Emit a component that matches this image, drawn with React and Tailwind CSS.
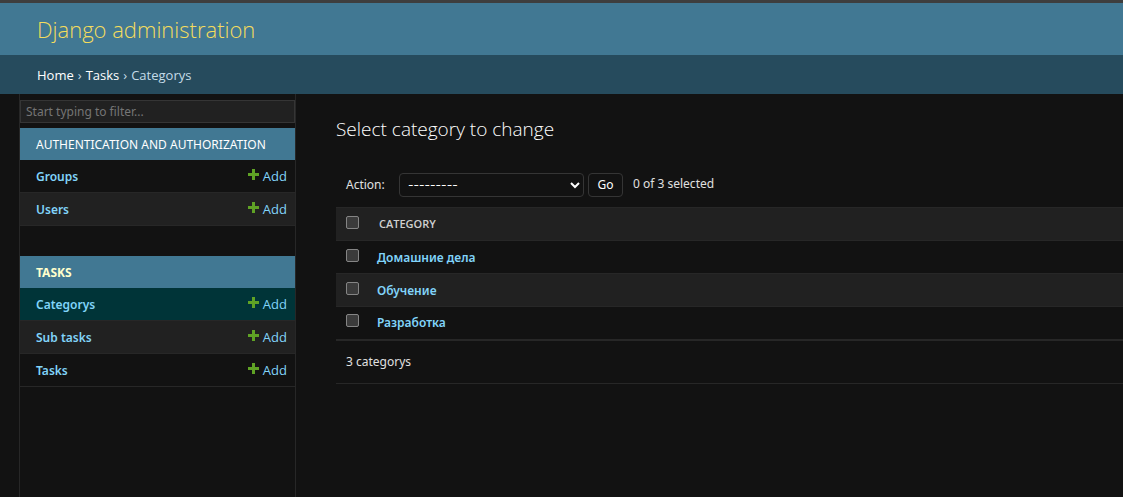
import { useState } from "react";

const sections = [
  { name: "Authentication and Authorization", current: false, models: ["Groups", "Users"] },
  { name: "Tasks", current: true, models: ["Categorys", "Sub tasks", "Tasks"] },
];

const categories = ["Домашние дела", "Обучение", "Разработка"];

function PlusIcon() {
  return (
    <svg className="mb-1 size-[11px]" viewBox="0 0 11 11" aria-hidden="true">
      <path fill="#5fa225" d="M4 0h3v4h4v3H7v4H4V7H0V4h4z" />
    </svg>
  );
}

function Section({ section }) {
  return (
    <section className="mb-[30px]">
      <h2
        className={
          section.current
            ? "flex h-8 items-center bg-[#417893] px-4 pt-px font-bold uppercase text-[#ffffcc]"
            : "flex h-8 items-center bg-[#417893] px-4 pt-px uppercase text-white"
        }
      >
        <a href="#app">{section.name}</a>
      </h2>
      <ul>
        {section.models.map((model) => (
          <li
            key={model}
            className={
              section.current && model === "Categorys"
                ? "flex h-[33px] items-center justify-between border-b border-[#272727] bg-[#003438] pt-px pl-4 pr-2"
                : "flex h-[33px] items-center justify-between border-b border-[#272727] pt-px pl-4 pr-2 even:bg-[#212121]"
            }
          >
            <a href="#model" className="font-semibold text-[#81d4fa]">{model}</a>
            <a href="#add" className="flex items-center gap-1 font-['Open_Sans',sans-serif] text-[13px] text-[#81d4fa]">
              <PlusIcon />
              Add
            </a>
          </li>
        ))}
      </ul>
    </section>
  );
}

const box =
  "block size-[13px] appearance-none rounded-[2px] border border-[#858585] bg-[#3b3b3b] checked:bg-[#81d4fa]";

export default function App() {
  const [selected, setSelected] = useState([]);
  const toggle = (name) =>
    setSelected((s) => (s.includes(name) ? s.filter((n) => n !== name) : [...s, name]));

  return (
    <div className="flex min-h-screen flex-col border-t-3 border-[#3e3e3e] bg-[#121212] font-['Noto_Sans',sans-serif] text-xs text-[#e0e0e0]">
      <header className="flex h-13 items-center bg-[#417893] px-[37px] pt-[2px] font-['Open_Sans',sans-serif]">
        <h1 className="text-[22px] font-light text-[#f5dd5d]">
          <a href="#home">Django administration</a>
        </h1>
      </header>
      <nav aria-label="Breadcrumbs" className="flex h-[39px] items-center gap-1 bg-[#264b5d] px-[37px] pt-[2px] font-['Open_Sans',sans-serif] text-[13px] text-[#c4dce8]">
        <a href="#home" className="text-white">Home</a>
        <span>›</span>
        <a href="#tasks" className="text-white">Tasks</a>
        <span>›</span>
        <span>Categorys</span>
      </nav>
      <div className="flex grow">
        <nav aria-label="Sidebar" className="ml-[19px] w-[277px] shrink-0 border-x border-[#272727] pt-[6px]">
          <input
            type="search"
            aria-label="Filter navigation items"
            placeholder="Start typing to filter..."
            className="mb-[5px] block h-[23px] w-full border border-[#353535] bg-[#212121] px-[5px] outline-none placeholder:text-[#757575]"
          />
          {sections.map((s) => (
            <Section key={s.name} section={s} />
          ))}
        </nav>
        <main className="min-w-0 grow pl-10 pt-5">
          <h2 className="font-['Open_Sans',sans-serif] text-[19px] leading-[30px] font-light text-white">
            Select category to change
          </h2>
          <form onSubmit={(e) => e.preventDefault()}>
            <div className="mt-[19px] flex h-11 items-center pl-[10px]">
              <label htmlFor="action" className="w-[53px]">Action:</label>
              <div className="relative">
                <select
                  id="action"
                  className="block h-6 w-[185px] appearance-none rounded border border-[#353535] bg-[#121212] pl-2 font-[Inter,sans-serif] text-xs text-white"
                >
                  <option>---------</option>
                  <option>Delete selected categorys</option>
                </select>
                <svg className="pointer-events-none absolute right-1 top-[9px] h-[7px] w-[10px]" viewBox="0 0 10 7" aria-hidden="true">
                  <path d="M1 1l4 4 4-4" fill="none" stroke="#fff" strokeWidth="2" />
                </svg>
              </div>
              <button type="submit" className="ml-1 h-6 w-[35px] rounded border border-[#353535] text-white">
                Go
              </button>
              <span className="ml-[10px] pb-[2px]">{selected.length} of 3 selected</span>
            </div>
            <table className="w-full border-collapse text-left">
              <thead>
                <tr className="h-[33px] border-y border-[#272727] bg-[#212121]">
                  <th className="w-[41px] pb-1 pl-[10px]">
                    <input
                      type="checkbox"
                      aria-label="Select all categories"
                      className={box}
                      checked={selected.length === categories.length}
                      onChange={(e) => setSelected(e.target.checked ? categories : [])}
                    />
                  </th>
                  <th className="pl-[2px] font-['Open_Sans',sans-serif] text-[11px] font-semibold uppercase text-[#d0d0d0]">Category</th>
                </tr>
              </thead>
              <tbody>
                {categories.map((name) => (
                  <tr key={name} className="h-[33px] border-b border-[#272727] even:bg-[#212121] last:border-b-2">
                    <td className="pb-1 pl-[10px]">
                      <input
                        type="checkbox"
                        aria-label={name}
                        className={box}
                        checked={selected.includes(name)}
                        onChange={() => toggle(name)}
                      />
                    </td>
                    <th className="pt-px font-semibold">
                      <a href="#change" className="text-[#81d4fa]">{name}</a>
                    </th>
                  </tr>
                ))}
              </tbody>
            </table>
            <p className="flex h-[43px] items-center border-b border-[#272727] pl-[10px]">3 categorys</p>
          </form>
        </main>
      </div>
    </div>
  );
}
